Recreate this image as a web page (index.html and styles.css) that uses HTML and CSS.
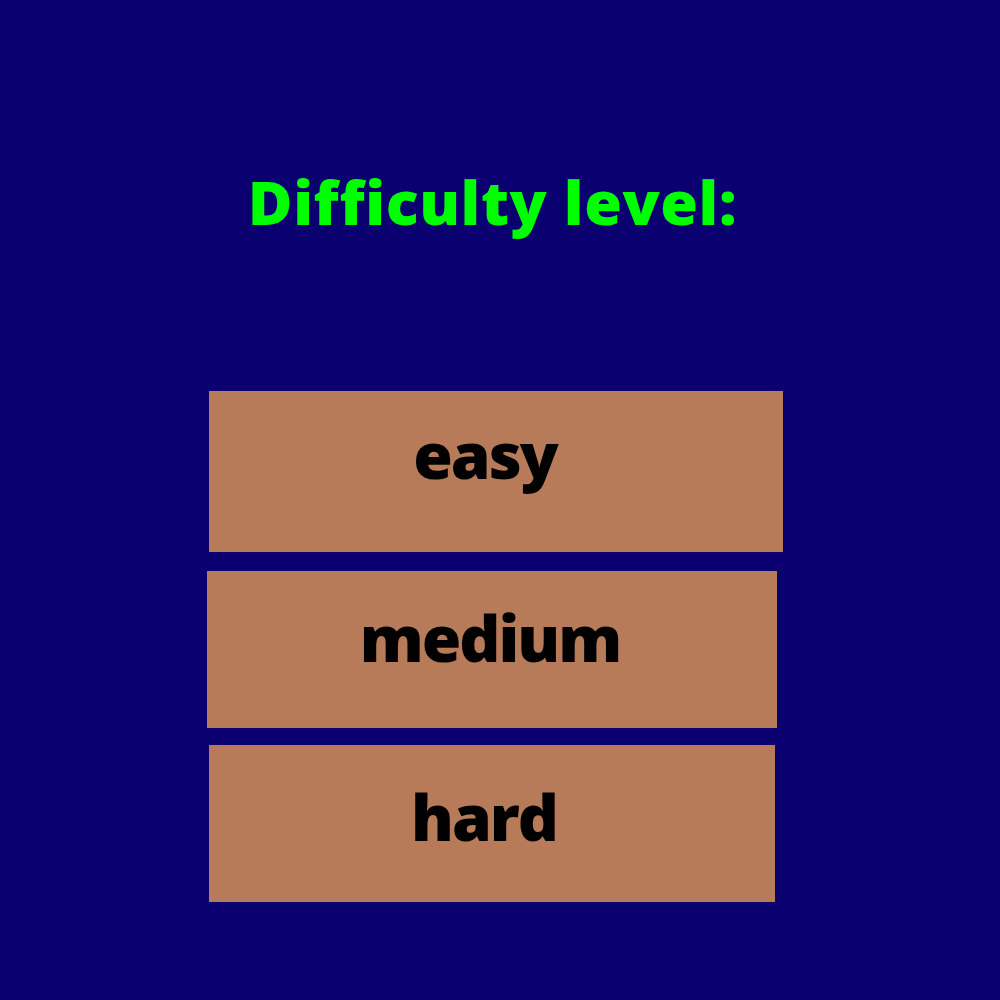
FILE: index.html
```html
<!DOCTYPE html>
<html>
<head>
<meta charset="utf-8">
<link rel="stylesheet" href="styles.css">
</head>
<body>
<main class="screen">
  <h1 class="title">Difficulty level:</h1>
  <div class="options">
    <button class="opt opt-easy">easy</button>
    <button class="opt opt-medium">medium</button>
    <button class="opt opt-hard">hard</button>
  </div>
</main>
</body>
</html>
```

FILE: styles.css
```css
html, body {
  margin: 0;
  padding: 0;
  background: #0a0070;
}
.screen {
  width: 1000px;
  height: 1000px;
  display: flex;
  flex-direction: column;
  font-family: "Open Sans", "Noto Sans", sans-serif;
}
.title {
  margin: 162px 0 0 0;
  height: 80px;
  line-height: 80px;
  text-align: center;
  padding-right: 15px;
  color: #00ff00;
  font-size: 61px;
  font-weight: 800;
  letter-spacing: 0.6px;
}
.options {
  margin-top: 149px;
  display: flex;
  flex-direction: column;
  align-items: flex-start;
}
.opt {
  border: 0;
  padding: 0;
  background: #b87b5a;
  color: #000;
  font-family: inherit;
  font-size: 64px;
  font-weight: 800;
  letter-spacing: -2px;
  display: flex;
  align-items: center;
  justify-content: center;
}
.opt-easy {
  margin-left: 209px;
  width: 574px;
  height: 161px;
  padding-right: 22px;
  padding-bottom: 34px;
}
.opt-medium {
  margin-top: 19px;
  margin-left: 207px;
  width: 570px;
  height: 157px;
  padding-right: 4px;
  padding-bottom: 24px;
}
.opt-hard {
  margin-top: 17px;
  margin-left: 209px;
  width: 566px;
  height: 157px;
  padding-right: 16px;
  padding-bottom: 14px;
}
```
